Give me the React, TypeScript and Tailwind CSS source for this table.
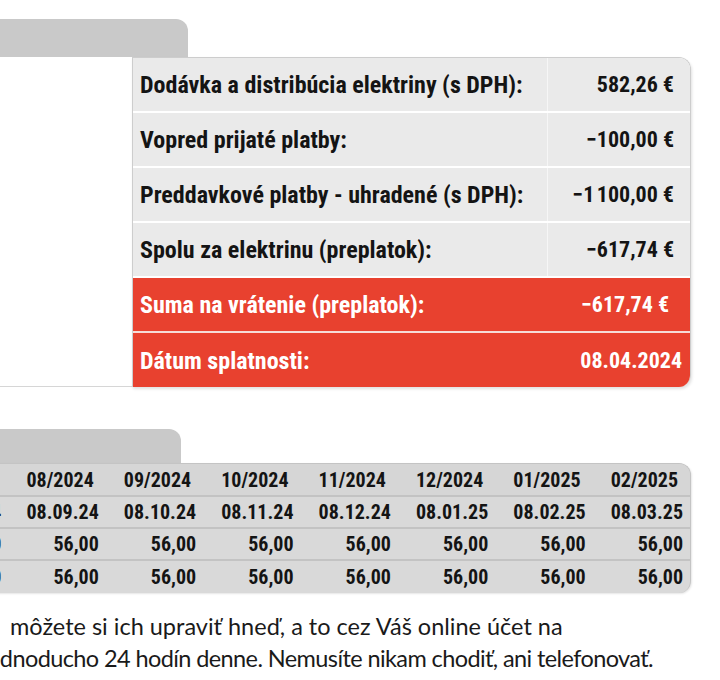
import React from "react";

const cond = { fontFamily: '"Roboto Condensed", "Roboto", "Liberation Sans", sans-serif' };

type TopRow = { label: string; value: string; red?: boolean; pr: string };

const topRows: TopRow[] = [
  { label: "Dodávka a distribúcia elektriny (s DPH):", value: "582,26 €", pr: "pr-[16px]" },
  { label: "Vopred prijaté platby:", value: "−100,00 €", pr: "pr-[16px]" },
  { label: "Preddavkové platby - uhradené (s DPH):", value: "−1\u202F100,00 €", pr: "pr-[16px]" },
  { label: "Spolu za elektrinu (preplatok):", value: "−617,74 €", pr: "pr-[16px]" },
  { label: "Suma na vrátenie (preplatok):", value: "−617,74 €", red: true, pr: "pr-[21px]" },
  { label: "Dátum splatnosti:", value: "08.04.2024", red: true, pr: "pr-[8px]" },
];

const months = ["07/2024", "08/2024", "09/2024", "10/2024", "11/2024", "12/2024", "01/2025", "02/2025"];
const dates = ["08.08.24", "08.09.24", "08.10.24", "08.11.24", "08.12.24", "08.01.25", "08.02.25", "08.03.25"];
const amounts = Array(8).fill("56,00");

export default function App() {
  return (
    <div className="w-[720px] h-[680px] overflow-hidden bg-white text-[#141414]" style={cond}>
      {/* top tab */}
      <div className="mt-[19px] h-[38px] w-[188px] rounded-tr-[12px] bg-[#c9c9c9]" />

      {/* top section */}
      <div className="flex h-[330px]">
        <div className="w-[132px] shrink-0 border-b border-[#d6d6d6] bg-white" />
        <div className="w-[559px] shrink-0 overflow-hidden rounded-r-[12px] border-l border-t border-r border-[#cdcdcd] shadow-[1px_2px_3px_rgba(0,0,0,0.12)]">
          {topRows.map((r, i) => (
            <div
              key={i}
              className={`flex h-[55px] items-center ${i < topRows.length - 1 ? (r.red ? "border-b-2 border-[#f6dcd8]" : "border-b-2 border-white") : ""} ${r.red ? "bg-[#e8412f] text-white" : "bg-[#eaeaea] text-[#141414]"}`}
            >
              <div className="flex h-full flex-1 items-center pl-[7px] text-[24px] font-bold leading-none whitespace-nowrap">
                {r.label}
              </div>
              <div
                className={`flex h-full w-[143px] shrink-0 items-center justify-end ${r.pr} text-[22px] font-bold leading-none whitespace-nowrap ${r.red ? "" : "border-l border-[#f6f6f6]"}`}
              >
                {r.value}
              </div>
            </div>
          ))}
        </div>
      </div>

      {/* bottom tab */}
      <div className="mt-[42px] h-[34px] w-[181px] rounded-tr-[12px] bg-[#c9c9c9]" />

      {/* bottom table */}
      <div className="ml-[-89px] w-[780px] overflow-hidden rounded-r-[12px] border-t border-r border-[#c4c4c4] bg-[#d9d9d9] shadow-[1px_1px_2px_rgba(0,0,0,0.1)]">
        <div className="flex h-[33px] items-center border-b-2 border-[#c3c3c3] bg-[#d6d6d6]">
          {months.map((m, i) => (
            <div key={i} className="flex-1 pr-[12px] text-right text-[20px] font-bold leading-none">
              {m}
            </div>
          ))}
        </div>
        <div className="flex h-[32px] items-center border-b-2 border-[#c3c3c3]">
          {dates.map((d, i) => (
            <div key={i} className="flex-1 pr-[7px] text-right text-[20px] font-bold leading-none">
              {d}
            </div>
          ))}
        </div>
        <div className="flex h-[32px] items-center border-b-2 border-[#c3c3c3]">
          {amounts.map((a, i) => (
            <div key={i} className="flex-1 pr-[7px] text-right text-[20px] font-bold leading-none">
              {a}
            </div>
          ))}
        </div>
        <div className="flex h-[32px] items-center">
          {amounts.map((a, i) => (
            <div key={i} className="flex-1 pr-[7px] text-right text-[20px] font-bold leading-none">
              {a}
            </div>
          ))}
        </div>
      </div>

      {/* paragraph */}
      <div
        className="mt-[17px] text-[23.5px] leading-[32px] text-[#1a1a1a] whitespace-nowrap"
        style={{ fontFamily: 'Lato, "Open Sans", sans-serif' }}
      >
        <div className="pl-[10px]">môžete si ich upraviť hneď, a to cez Váš online účet na</div>
        <div className="ml-[-17px] tracking-[-0.6px]">jednoducho 24 hodín denne. Nemusíte nikam chodiť, ani telefonovať.</div>
      </div>
    </div>
  );
}
